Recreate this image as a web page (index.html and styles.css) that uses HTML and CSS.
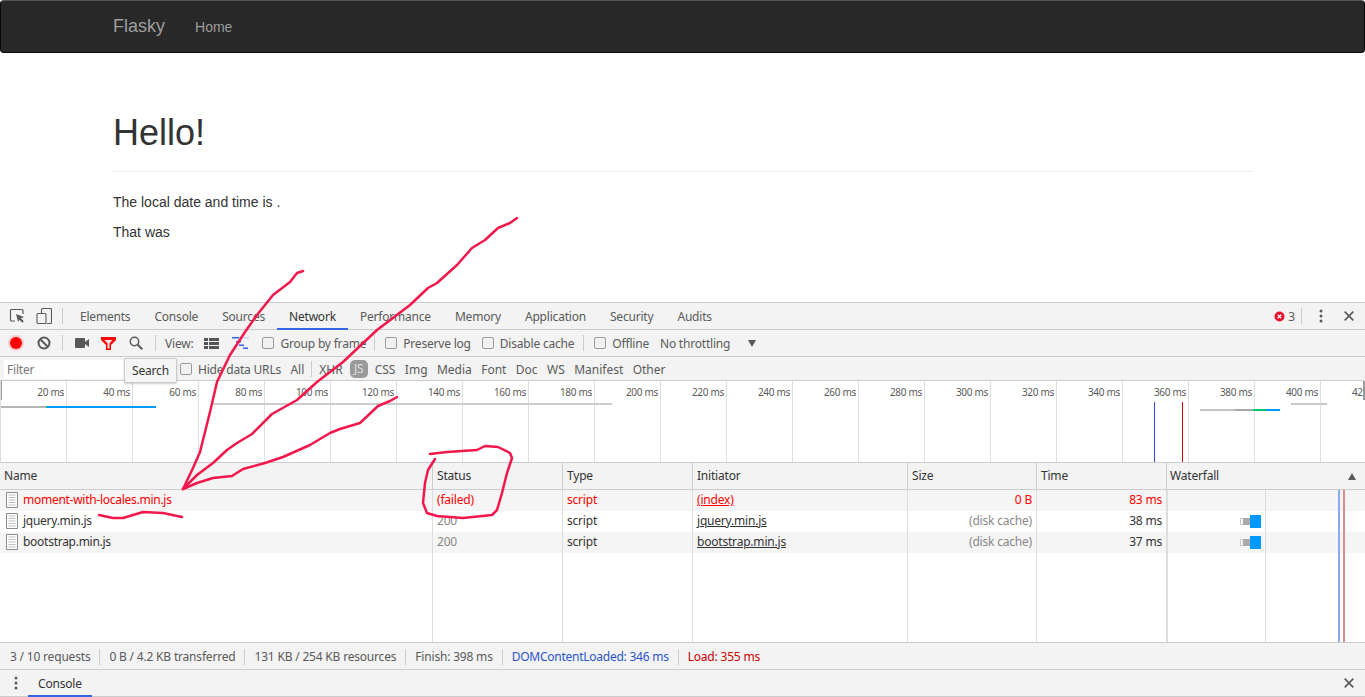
FILE: index.html
```html
<!DOCTYPE html>
<html lang="en">
<head>
  <meta charset="UTF-8" />
  <meta name="viewport" content="width=device-width, initial-scale=1.0"/>
  <title>Flasky</title>
  <link rel="stylesheet" href="styles.css">
</head>
<body>

  <!-- Page under inspection -->
  <div class="page">
    <nav class="navbar">
      <a class="brand">Flasky</a>
      <a class="nav-link">Home</a>
    </nav>
    <div class="content">
      <h1>Hello!</h1>
      <hr>
      <p>The local date and time is .</p>
      <p>That was</p>
    </div>
  </div>

  <!-- DevTools -->
  <div class="devtools">
    <div class="bar tabs">
      <svg class="ico ico-inspect" width="16" height="16" viewBox="0 0 16 16"><path d="M6 13H2.500a1 1 0 0 1-1-1V2.500a1 1 0 0 1 1-1H13a1 1 0 0 1 1 1V6" fill="none" stroke="#5a5a5a" stroke-width="1.200"/><path d="M7 6l8 3-3 1.300 2.800 2.900-1.500 1.500-2.800-2.900L9.200 14z" fill="#5a5a5a"/></svg>
      <svg class="ico ico-device" width="16" height="16" viewBox="0 0 16 16"><path d="M5.500 5V1.500a1 1 0 0 1 1-1h8a1 1 0 0 1 1 1v13a1 1 0 0 1-1 1H11" fill="none" stroke="#5a5a5a" stroke-width="1.100"/><rect x="1" y="5.500" width="9" height="10" rx="1" fill="none" stroke="#5a5a5a" stroke-width="1.100"/></svg>
      <span class="sep sep-tabs"></span>
      <a class="tab">Elements</a>
      <a class="tab">Console</a>
      <a class="tab">Sources</a>
      <a class="tab active">Network</a>
      <a class="tab">Performance</a>
      <a class="tab">Memory</a>
      <a class="tab">Application</a>
      <a class="tab">Security</a>
      <a class="tab">Audits</a>
      <span class="spacer"></span>
      <svg class="ico" width="11" height="11" viewBox="0 0 11 11"><circle cx="5.500" cy="5.500" r="5" fill="#e8112d"/><path d="M3.700 3.700l3.600 3.600M7.300 3.700l-3.600 3.600" stroke="#fff" stroke-width="1.300"/></svg>
      <span class="err-count">3</span>
      <span class="sep sep-err"></span>
      <svg class="ico ico-kebab" width="4" height="14" viewBox="0 0 4 14"><circle cx="2" cy="2" r="1.500" fill="#5a5a5a"/><circle cx="2" cy="7" r="1.500" fill="#5a5a5a"/><circle cx="2" cy="12" r="1.500" fill="#5a5a5a"/></svg>
      <svg class="ico ico-close" width="10" height="10" viewBox="0 0 10 10"><path d="M.7.700l8.600 8.600M9.300.700L.7 9.300" stroke="#5a5a5a" stroke-width="1.700"/></svg>
    </div>

    <div class="bar toolbar">
      <span class="record"></span>
      <svg class="ico ico-clear" width="14" height="14" viewBox="0 0 14 14"><circle cx="7" cy="7" r="5.500" fill="none" stroke="#5a5a5a" stroke-width="2"/><path d="M3 3l8 8" stroke="#5a5a5a" stroke-width="2"/></svg>
      <span class="sep sep-a"></span>
      <svg class="ico ico-video" width="14" height="10" viewBox="0 0 14 10"><rect width="10" height="10" rx="1" fill="#5a5a5a"/><path d="M10 4l4-3v8l-4-3z" fill="#5a5a5a"/></svg>
      <svg class="ico ico-filter" width="15" height="13" viewBox="0 0 15 13"><path d="M0 0h15v3L10 8v5H5V8L0 3z" fill="#f00"/><path d="M3.500 3h8L8.500 6.500v5h-2v-5z" fill="#fbe0e0"/></svg>
      <svg class="ico ico-search" width="14" height="14" viewBox="0 0 14 14"><circle cx="5.500" cy="5.500" r="4.200" fill="none" stroke="#5a5a5a" stroke-width="1.500"/><path d="M8.800 8.800l4.500 4.500" stroke="#5a5a5a" stroke-width="2"/></svg>
      <span class="sep sep-b"></span>
      <span class="view-label">View:</span>
      <svg class="ico ico-list" width="15" height="11" viewBox="0 0 15 11"><path d="M0 0h4v3H0zM5 0h10v3H5zM0 4h4v3H0zM5 4h10v3H5zM0 8h4v3H0zM5 8h10v3H5z" fill="#555"/></svg>
      <svg class="ico ico-fall" width="17" height="12" viewBox="0 0 17 12"><path d="M0 0h7v1.500H0zM4 4h5v1.500H4zM7 7.500h5V9H7zM11 10.500h5V12h-5z" fill="#3367e8"/><path d="M7 0h10v1.500H7z" fill="#c9d5f5"/></svg>
      <label class="check check-group"><span class="box"></span>Group by frame</label>
      <span class="sep sep-c"></span>
      <label class="check check-log"><span class="box"></span>Preserve log</label>
      <label class="check check-cache"><span class="box"></span>Disable cache</label>
      <span class="sep sep-d"></span>
      <label class="check check-off"><span class="box"></span>Offline</label>
      <span class="throttle">No throttling</span>
      <span class="arrow-down"></span>
    </div>

    <div class="bar filters">
      <span class="filter-input">Filter</span>
      <label class="check check-urls"><span class="box"></span>Hide data URLs</label>
      <a class="ftype f-all">All</a>
      <span class="sep sep-f"></span>
      <a class="ftype f-xhr">XHR</a>
      <a class="pill">JS</a>
      <a class="ftype f-css">CSS</a>
      <a class="ftype">Img</a>
      <a class="ftype">Media</a>
      <a class="ftype">Font</a>
      <a class="ftype">Doc</a>
      <a class="ftype">WS</a>
      <a class="ftype">Manifest</a>
      <a class="ftype">Other</a>
      <div class="tooltip">Search</div>
    </div>

    <div class="overview">
      <div class="tick">20 ms</div><div class="tick">40 ms</div><div class="tick">60 ms</div>
      <div class="tick">80 ms</div><div class="tick">100 ms</div><div class="tick">120 ms</div>
      <div class="tick">140 ms</div><div class="tick">160 ms</div><div class="tick">180 ms</div>
      <div class="tick">200 ms</div><div class="tick">220 ms</div><div class="tick">240 ms</div>
      <div class="tick">260 ms</div><div class="tick">280 ms</div><div class="tick">300 ms</div>
      <div class="tick">320 ms</div><div class="tick">340 ms</div><div class="tick">360 ms</div>
      <div class="tick">380 ms</div><div class="tick">400 ms</div><div class="tick">420 ms</div>
      <span class="ov ov-handle-l"></span>
      <span class="ov ov-handle-r"></span>
      <span class="ov ov-g1"></span>
      <span class="ov ov-g2"></span>
      <span class="ov ov-b1"></span>
      <span class="ov ov-long"></span>
      <span class="ov ov-dom"></span>
      <span class="ov ov-load"></span>
      <span class="ov ov-g3"></span>
      <span class="ov ov-g4"></span>
      <span class="ov ov-gr"></span>
      <span class="ov ov-b2"></span>
      <span class="ov ov-g5"></span>
    </div>

    <div class="grid-wrap">
      <table class="grid">
        <colgroup>
          <col class="c-name"><col class="c-status"><col class="c-type"><col class="c-init"><col class="c-size"><col class="c-time"><col>
        </colgroup>
        <thead>
          <tr>
            <th>Name</th><th>Status</th><th>Type</th><th>Initiator</th><th>Size</th><th>Time</th>
            <th class="th-fall">Waterfall<span class="arrow-up"></span></th>
          </tr>
        </thead>
        <tbody>
          <tr class="failed">
            <td class="td-name"><svg class="file" width="12" height="16" viewBox="0 0 12 16"><path d="M.5.500h11v15H.5z" fill="#fff" stroke="#8c8c8c"/><path d="M2.500 3h7M2.500 5.500h7M2.500 8h7M2.500 10.500h7M2.500 13h7" stroke="#bdbdbd"/></svg>moment-with-locales.min.js</td>
            <td>(failed)</td><td>script</td><td><u>(index)</u></td><td class="num">0 B</td><td class="num">83 ms</td><td></td>
          </tr>
          <tr>
            <td class="td-name"><svg class="file" width="12" height="16" viewBox="0 0 12 16"><path d="M.5.500h11v15H.5z" fill="#fff" stroke="#8c8c8c"/><path d="M2.500 3h7M2.500 5.500h7M2.500 8h7M2.500 10.500h7M2.500 13h7" stroke="#bdbdbd"/></svg>jquery.min.js</td>
            <td class="dim">200</td><td>script</td><td><u>jquery.min.js</u></td><td class="num dim">(disk cache)</td><td class="num">38 ms</td><td></td>
          </tr>
          <tr>
            <td class="td-name"><svg class="file" width="12" height="16" viewBox="0 0 12 16"><path d="M.5.500h11v15H.5z" fill="#fff" stroke="#8c8c8c"/><path d="M2.500 3h7M2.500 5.500h7M2.500 8h7M2.500 10.500h7M2.500 13h7" stroke="#bdbdbd"/></svg>bootstrap.min.js</td>
            <td class="dim">200</td><td>script</td><td><u>bootstrap.min.js</u></td><td class="num dim">(disk cache)</td><td class="num">37 ms</td><td></td>
          </tr>
          <tr class="filler"><td></td><td></td><td></td><td></td><td></td><td></td><td></td></tr>
        </tbody>
      </table>
      <span class="wf wf-mid"></span>
      <span class="wf wf-dom"></span>
      <span class="wf wf-load"></span>
      <span class="wbar wbar-1"><i class="w-wait"></i><i class="w-queue"></i><i class="w-recv"></i></span>
      <span class="wbar wbar-2"><i class="w-wait"></i><i class="w-queue"></i><i class="w-recv"></i></span>
    </div>

    <div class="bar status">
      <span class="st">3 / 10 requests</span>
      <span class="st">0 B / 4.2 KB transferred</span>
      <span class="st">131 KB / 254 KB resources</span>
      <span class="st">Finish: 398 ms</span>
      <span class="st st-blue">DOMContentLoaded: 346 ms</span>
      <span class="st st-red">Load: 355 ms</span>
    </div>

    <div class="bar drawer">
      <svg class="ico ico-kebab2" width="4" height="14" viewBox="0 0 4 14"><circle cx="2" cy="2" r="1.500" fill="#5a5a5a"/><circle cx="2" cy="7" r="1.500" fill="#5a5a5a"/><circle cx="2" cy="12" r="1.500" fill="#5a5a5a"/></svg>
      <a class="tab drawer-tab active">Console</a>
      <span class="spacer"></span>
      <svg class="ico ico-close" width="10" height="10" viewBox="0 0 10 10"><path d="M.7.700l8.600 8.600M9.300.700L.7 9.300" stroke="#5a5a5a" stroke-width="1.700"/></svg>
    </div>
  </div>

  <!-- Red pen annotations drawn on top of the screenshot -->
  <svg class="scribble" width="1365" height="697" viewBox="0 0 1365 697">
    <path d="M183 489L193 468 200 452 205 432 210 412 217 382 230 355 245 332 257 315 273 295 290 282 297 273 303 271"/>
    <path d="M183 489L197 475 213 463 227 450 237 443 252 434 272 414 297 400 317 382 343 362 377 330 410 305 428 288 437 283 457 265 472 248 485 240 498 228 510 223 517 218"/>
    <path d="M183 489L197 483 213 478 232 476 243 469 265 463 283 457 310 445 330 433 340 429 360 423 378 406 390 401 397 397"/>
    <path d="M99 515L113 518 123 518 143 512 163 513 182 517"/>
    <path d="M430 454L447 452 477 450 485 446 498 447 510 453 512 458 507 473 502 493 497 510 492 515 463 518 437 516 427 513 423 503 425 483 428 470 435 459"/>
  </svg>

</body>
</html>
```

FILE: styles.css
```css
* { box-sizing: border-box; }
html, body {
  margin: 0;
  height: 697px;
  overflow: hidden;
  background: #fff;
}
body {
  display: flex;
  flex-direction: column;
  font-family: "Liberation Sans", Arial, sans-serif;
  font-size: 14px;
  color: #333;
}
/* ---------- Page ---------- */
.page {
  height: 302px;
  flex: none;
}
.navbar {
  height: 53px;
  padding-left: 112px;
  display: flex;
  align-items: center;
  background: #282828;
  border: 1px solid #080808;
  border-top-color: #555;
  border-radius: 4px;
}
.brand {
  font-size: 18px;
  color: #9d9d9d;
}
.nav-link {
  margin-left: 30px;
  color: #9d9d9d;
}
.content {
  margin: 0 113px;
}
.content h1 {
  margin: 60px 0 0;
  font-size: 36px;
  font-weight: 400;
  line-height: 40px;
}
.content hr {
  margin: 18px 0 20px;
  border: none;
  border-top: 1px solid #eee;
}
.content p {
  margin: 0 0 10px;
  line-height: 20px;
}
/* ---------- DevTools shared ---------- */
.devtools {
  flex: 1;
  display: flex;
  flex-direction: column;
  font-family: "Noto Sans", sans-serif;
  font-size: 12px;
  letter-spacing: -0.2px;
  color: #5a5a5a;
  border-top: 1px solid #ccc;
  position: relative;
}
.bar {
  display: flex;
  align-items: center;
  flex: none;
  background: #f3f3f3;
  border-bottom: 1px solid #ccc;
  white-space: nowrap;
}
.ico { flex: none; display: block; }
.spacer { flex: 1; }
.sep {
  flex: none;
  width: 1px;
  height: 16px;
  background: #ccc;
}
.check {
  display: flex;
  align-items: center;
  gap: 6px;
}
.box {
  width: 12px;
  height: 12px;
  background: #f1f1f1;
  border: 1px solid #9a9a9a;
  border-radius: 2px;
}
/* ---------- Tabs ---------- */
.tabs { height: 27px; }
.ico-inspect { margin-left: 9px; }
.ico-device { margin-left: 11px; }
.sep-tabs { margin-left: 10px; margin-right: 5px; }
.tab {
  height: 26px;
  line-height: 26px;
  padding: 0 12px;
  margin-top: 1px;
}
.tab.active {
  color: #333;
  border-bottom: 2px solid #3367e8;
}
.err-count { margin-left: 3px; }
.sep-err { margin: 0 0 0 6px; }
.ico-kebab { margin-left: 17px; }
.ico-close { margin: 0 11px 0 21px; }
/* ---------- Toolbar ---------- */
.toolbar { height: 27px; }
.record {
  flex: none;
  width: 12px;
  height: 12px;
  margin-left: 10px;
  background: #f00;
  border-radius: 50%;
  box-shadow: 0 0 0 2px rgba(255, 0, 0, 0.15);
}
.ico-clear { margin-left: 15px; }
.sep-a { margin-left: 11px; }
.ico-video { margin-left: 12px; }
.ico-filter { margin-left: 12px; }
.ico-search { margin-left: 13px; }
.sep-b { margin-left: 12px; }
.view-label { margin-left: 9px; }
.ico-list { margin-left: 11px; }
.ico-fall { margin-left: 13px; }
.check-group { margin-left: 13px; }
.sep-c { margin-left: 8px; }
.check-log { margin-left: 10px; }
.check-cache { margin-left: 11px; }
.sep-d { margin-left: 9px; }
.check-off { margin-left: 10px; }
.throttle { margin-left: 11px; }
.arrow-down {
  margin-left: 18px;
  border: 4.500px solid transparent;
  border-top: 7px solid #5a5a5a;
  border-bottom: none;
}
/* ---------- Filter row ---------- */
.filters {
  height: 24px;
  padding-top: 1px;
  position: relative;
}
.filter-input {
  width: 120px;
  height: 19px;
  margin-left: 4px;
  padding-left: 3px;
  line-height: 19px;
  background: #fff;
  color: #777;
}
.check-urls { margin-left: 56px; }
.ftype { margin-left: 9.400px; letter-spacing: 0; }
.sep-f { margin-left: 7px; }
.f-xhr { margin-left: 7px; }
.f-css { margin-left: 7px; }
.pill {
  flex: none;
  width: 18px;
  height: 18px;
  margin-left: 7px;
  line-height: 18px;
  text-align: center;
  background: #9a9a9a;
  color: #ddd;
  border-radius: 5px;
}
.tooltip {
  position: absolute;
  left: 124px;
  top: 1px;
  width: 53px;
  height: 25px;
  line-height: 24px;
  text-align: center;
  color: #333;
  background: #f5f5f5;
  border: 1px solid #ccc;
  border-radius: 2px;
  box-shadow: 0 1px 2px rgba(0, 0, 0, 0.2);
  z-index: 2;
}
/* ---------- Overview ---------- */
.overview {
  flex: none;
  height: 82px;
  display: flex;
  position: relative;
  overflow: hidden;
  border-bottom: 1px solid #ccc;
  border-left: 1px solid #ddd;
  font-size: 10px;
  letter-spacing: -0.3px;
}
.tick {
  flex: none;
  width: 66px;
  padding: 4px 2px 0 0;
  text-align: right;
  border-right: 1px solid #e0e0e0;
}
.ov { position: absolute; display: block; height: 2px; }
.ov-handle-l { left: -1px; top: 0; width: 2px; height: 19px; background: #999; }
.ov-handle-r { right: 0; top: 0; width: 2px; height: 19px; background: #999; }
.ov-g1 { left: 0; top: 25px; width: 45px; background: #b5b5b5; }
.ov-g2 { left: 45px; top: 25px; width: 1px; background: #0c6; }
.ov-b1 { left: 46px; top: 25px; width: 109px; background: #09f; }
.ov-long { left: 212px; top: 22px; width: 399px; background: #ccc; }
.ov-dom { left: 1153px; top: 21px; width: 1px; height: 60px; background: #2a4fd0; }
.ov-load { left: 1181px; top: 21px; width: 1px; height: 60px; background: #c00; }
.ov-g3 { left: 1199px; top: 28px; width: 35px; background: #c4c4c4; }
.ov-g4 { left: 1234px; top: 28px; width: 18px; background: #a8a8a8; }
.ov-gr { left: 1252px; top: 28px; width: 13px; background: #0c6; }
.ov-b2 { left: 1265px; top: 28px; width: 14px; background: #09f; }
.ov-g5 { left: 1290px; top: 22px; width: 36px; background: #c8c8c8; }
/* ---------- Request grid ---------- */
.grid-wrap {
  flex: 1;
  min-height: 0;
  position: relative;
}
.grid {
  width: 100%;
  table-layout: fixed;
  border-collapse: separate;
  border-spacing: 0;
}
.c-name { width: 432px; }
.c-status, .c-type { width: 130px; }
.c-init { width: 215px; }
.c-size { width: 129px; }
.c-time { width: 130px; }
.grid th {
  height: 27px;
  padding: 0 4px 2px;
  font-weight: 400;
  text-align: left;
  color: #333;
  background: #f3f3f3;
  border-bottom: 1px solid #ccc;
  border-left: 1px solid #ccc;
}
.grid th:first-child, .grid td:first-child { border-left: none; }
.grid th.th-fall { position: relative; padding-left: 3px; }
.arrow-up {
  position: absolute;
  right: 9px;
  top: 10px;
  border: 4.500px solid transparent;
  border-bottom: 7px solid #5a5a5a;
  border-top: none;
}
.grid td {
  height: 21px;
  padding: 0 4px 2px;
  color: #333;
  white-space: nowrap;
  overflow: hidden;
  border-left: 1px solid #ddd;
}
.grid td:last-child { border-left: 2px solid #ddd; }
.grid tbody tr:nth-child(odd) { background: #f5f5f5; }
.grid tbody tr.filler { background: #fff; }
.grid tr.filler td { height: 89px; }
.grid .failed td { color: #f00; }
.grid td.dim { color: #888; }
.grid td.num { text-align: right; }
.grid td.td-name { letter-spacing: -0.27px; }
.file {
  vertical-align: -4px;
  margin: 0 5px 0 2px;
}
.wf { position: absolute; display: block; top: 27px; bottom: 0; }
.wf-mid { left: 1265px; width: 1px; background: #ddd; }
.wf-dom { left: 1338px; width: 2px; background: #8fa9ea; }
.wf-load { left: 1343px; width: 2px; background: #df8a8a; }
.wbar {
  position: absolute;
  left: 1240px;
  width: 21px;
  height: 13px;
  display: flex;
  align-items: center;
}
.wbar-1 { top: 52px; }
.wbar-2 { top: 73px; }
.w-wait { width: 3px; height: 7px; border: 1px solid #ccc; border-right: none; }
.w-queue { width: 7px; height: 7px; background: #aaa; }
.w-recv { width: 11px; height: 13px; background: #09f; }
/* ---------- Status ---------- */
.status {
  height: 28px;
  padding-top: 1px;
  border-top: 1px solid #ccc;
  letter-spacing: -0.19px;
}
.st {
  padding: 0 9px;
  line-height: 16px;
  border-left: 1px solid #ccc;
}
.st:first-child { border-left: none; padding-left: 10px; }
.st-blue { color: #2a53cd; letter-spacing: -0.25px; }
.st-red { color: #c80000; }
/* ---------- Drawer ---------- */
.drawer { height: 27px; }
.ico-kebab2 { margin-left: 14px; }
.drawer-tab {
  margin-left: 10px;
  padding: 0 10px;
  color: #333;
}
/* ---------- Annotations ---------- */
.scribble {
  position: absolute;
  left: 0;
  top: 0;
  pointer-events: none;
  z-index: 5;
}
.scribble path {
  fill: none;
  stroke: #f2184c;
  stroke-width: 2.500;
  stroke-linecap: round;
  stroke-linejoin: round;
}
```
